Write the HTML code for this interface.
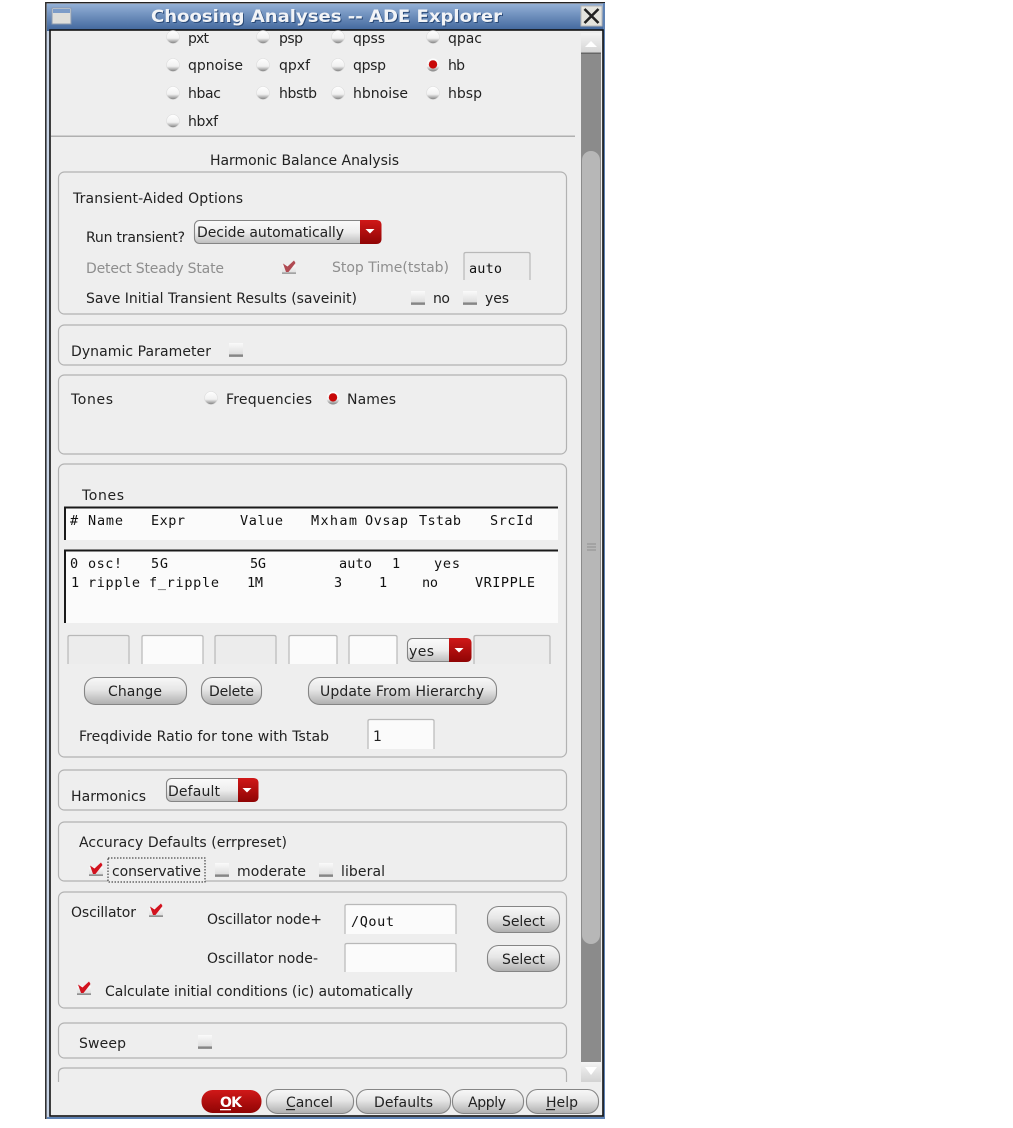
<!DOCTYPE html>
<html><head><meta charset="utf-8"><style>
html,body{margin:0;padding:0;background:#fff;overflow:hidden}
svg{display:block;filter:blur(.35px)}
text{font-family:"DejaVu Sans","Liberation Sans",sans-serif;font-size:14px;fill:#222}
.m text,text.m{font-family:"DejaVu Sans Mono","Liberation Mono",monospace;font-size:13.5px;fill:#111}
.g{fill:#8e8e8e}
.p{fill:none;stroke:#b2b2b2;stroke-width:1.2}
.i{fill:#fbfbfb;stroke:none}
.ig{fill:#ececec}
.it{fill:none;stroke:#b8b8b8;stroke-width:1.2}
.btn{fill:url(#bg);stroke:#858585;stroke-width:1.1}
</style></head><body>
<svg xmlns="http://www.w3.org/2000/svg" width="1013" height="1128" viewBox="0 0 1013 1128">
<defs>
<linearGradient id="tb" x1="0" y1="0" x2="0" y2="1"><stop offset="0" stop-color="#93b0d6"/><stop offset="1" stop-color="#3f659b"/></linearGradient>
<linearGradient id="bg" x1="0" y1="0" x2="0" y2="1"><stop offset="0" stop-color="#f8f8f8"/><stop offset=".45" stop-color="#e6e6e6"/><stop offset="1" stop-color="#aeaeae"/></linearGradient>
<linearGradient id="dd" x1="0" y1="0" x2="0" y2="1"><stop offset="0" stop-color="#fafafa"/><stop offset=".5" stop-color="#eeeeee"/><stop offset="1" stop-color="#bdbdbd"/></linearGradient>
<linearGradient id="red" x1="0" y1="0" x2="0" y2="1"><stop offset="0" stop-color="#d01818"/><stop offset="1" stop-color="#8f0404"/></linearGradient>
<linearGradient id="rad" x1="0" y1="0" x2="0" y2="1"><stop offset="0" stop-color="#ffffff"/><stop offset=".6" stop-color="#f0f0f0"/><stop offset="1" stop-color="#7e7e7e"/></linearGradient>
<linearGradient id="chk" x1="0" y1="0" x2="0" y2="1"><stop offset="0" stop-color="#fafafa"/><stop offset=".8" stop-color="#dedede"/><stop offset=".84" stop-color="#7c7c7c"/><stop offset="1" stop-color="#9a9a9a"/></linearGradient>
<linearGradient id="sc" x1="0" y1="0" x2="0" y2="1"><stop offset="0" stop-color="#f4f4f4"/><stop offset="1" stop-color="#d2d2d2"/></linearGradient>
<g id="r"><circle r="6.5" fill="url(#rad)" stroke="#dcdcdc" stroke-width=".6"/></g>
<g id="rr"><circle r="6.5" fill="url(#rad)"/><circle cy="-.6" r="4.2" fill="#c80808"/></g>
<g id="c"><rect x="-7" y="-7" width="14" height="14" fill="url(#chk)"/></g>
<g id="ck"><rect x="-7" y="-2" width="14" height="9" fill="url(#chk)"/><path d="M-6-3.500 L-1.500-.5 L5-6.500 L6.500-4 L-.5 5 L-3 5 Z" fill="#d2121e"/></g>
<g id="ckg"><rect x="-7" y="-2" width="14" height="9" fill="url(#chk)" opacity=".8"/><path d="M-6-3.500 L-1.500-.5 L5-6.500 L6.500-4 L-.5 5 L-3 5 Z" fill="#b04a52"/></g>
<path id="tri" d="M-4.500-2 H4.500 L0 2.500Z" fill="#fff"/>
</defs>

<!-- window frame -->
<rect x="45" y="2" width="560" height="1117" fill="#c8d4e6"/>
<rect x="45" y="2" width="560" height="1.4" fill="#222"/>
<rect x="45" y="2" width="1.600" height="1117" fill="#333"/>
<rect x="603" y="3" width="2" height="1116" fill="#5f83b5"/>
<rect x="47" y="4" width="556" height="27" fill="url(#tb)"/>
<rect x="47" y="1117" width="558" height="2" fill="#5f83b5"/>
<rect x="50" y="30" width="553" height="1086" fill="#eeeeee" stroke="#111" stroke-width="1.6"/>

<!-- title bar -->
<rect x="52" y="8" width="19" height="16" fill="#dededa" stroke="#8a9ab0"/>
<rect x="53" y="9" width="17" height="4" fill="#7c9cc8"/>
<text x="152" y="23" textLength="351" lengthAdjust="spacingAndGlyphs" style="font-size:17px;font-weight:bold;fill:#2a4a78">Choosing Analyses -- ADE Explorer</text>
<text x="151" y="22" textLength="351" lengthAdjust="spacingAndGlyphs" style="font-size:17px;font-weight:bold;fill:#f2f4f7">Choosing Analyses -- ADE Explorer</text>
<rect x="581" y="6" width="21" height="20" fill="#e4e4de" stroke="#b5b5b5"/>
<path d="M584.500 9 L598.500 23 M598.500 9 L584.500 23" stroke="#222" stroke-width="2.6" fill="none"/>

<!-- scrollbar -->
<rect x="581" y="33" width="20" height="1049" fill="#8b8b8b"/>
<rect x="581" y="33" width="20" height="21" fill="url(#sc)"/>
<rect x="581" y="52.500" width="20" height="1.500" fill="#666"/>
<path d="M591 41 L597 47 H585Z" fill="#fff"/>
<rect x="582" y="151" width="18" height="793" rx="9" fill="#b7b7b7"/>
<path d="M587 544 H596 M587 547 H596 M587 550 H596" stroke="#8f8f8f" fill="none"/>
<rect x="581" y="1062" width="20" height="20" fill="url(#sc)"/>
<path d="M585 1067 H597 L591 1075Z" fill="#fff"/>

<!-- radios top -->
<use href="#r" x="173" y="37"/><text x="188" y="43" textLength="21">pxt</text>
<use href="#r" x="263" y="37"/><text x="279" y="43" textLength="24">psp</text>
<use href="#r" x="338" y="37"/><text x="353" y="43" textLength="32">qpss</text>
<use href="#r" x="433" y="37"/><text x="448" y="43" textLength="34">qpac</text>
<use href="#r" x="173" y="65"/><text x="188" y="70" textLength="55">qpnoise</text>
<use href="#r" x="263" y="65"/><text x="279" y="70" textLength="31">qpxf</text>
<use href="#r" x="338" y="65"/><text x="353" y="70" textLength="33">qpsp</text>
<use href="#rr" x="433" y="65"/><text x="448" y="70" textLength="17">hb</text>
<use href="#r" x="173" y="93"/><text x="188" y="98" textLength="33">hbac</text>
<use href="#r" x="263" y="93"/><text x="279" y="98" textLength="38">hbstb</text>
<use href="#r" x="338" y="93"/><text x="353" y="98" textLength="55">hbnoise</text>
<use href="#r" x="433" y="93"/><text x="448" y="98" textLength="34">hbsp</text>
<use href="#r" x="173" y="121"/><text x="188" y="126" textLength="30">hbxf</text>
<rect x="51" y="135.500" width="524" height="1.500" fill="#b0b0b0"/>
<text x="210" y="165" textLength="189">Harmonic Balance Analysis</text>

<!-- panel frames -->
<rect class="p" x="58.500" y="172" width="508" height="142" rx="6"/>
<rect class="p" x="58.500" y="325" width="508" height="40" rx="6"/>
<rect class="p" x="58.500" y="375" width="508" height="79" rx="6"/>
<rect class="p" x="58.500" y="464" width="508" height="293" rx="6"/>
<rect class="p" x="58.500" y="770" width="508" height="40" rx="6"/>
<rect class="p" x="58.500" y="822" width="508" height="59" rx="6"/>
<rect class="p" x="58.500" y="892" width="508" height="116" rx="6"/>
<rect class="p" x="58.500" y="1023" width="508" height="35" rx="6"/>
<path class="p" d="M58.500 1082 V1074 Q58.500 1068 64.500 1068 H560.500 Q566.500 1068 566.500 1074 V1082"/>

<!-- transient -->
<text x="73" y="203" textLength="170">Transient-Aided Options</text>
<text x="86" y="242" textLength="99">Run transient?</text>
<rect class="btn" x="194.500" y="220.500" width="186" height="23" rx="5" style="fill:url(#dd)"/>
<path d="M360 220 H376 Q381.500 220 381.500 225 V239 Q381.500 244 376 244 H360Z" fill="url(#red)"/>
<use href="#tri" x="370" y="231"/>
<text x="197" y="237" textLength="147">Decide automatically</text>
<text class="g" x="86" y="273" textLength="138">Detect Steady State</text>
<use href="#ckg" x="289" y="267"/>
<text class="g" x="332" y="272" textLength="117">Stop Time(tstab)</text>
<rect class="ig" x="464" y="252" width="66" height="28"/><path class="it" d="M464 280 V254 Q464 252.500 466 252.500 H528 Q530 252.500 530 254 V280"/>
<text class="m" x="469" y="273" textLength="33">auto</text>
<text x="86" y="303" textLength="271">Save Initial Transient Results (saveinit)</text>
<use href="#c" x="418" y="298"/><text x="433" y="303" textLength="17">no</text>
<use href="#c" x="470" y="298"/><text x="485" y="303" textLength="24">yes</text>

<text x="71" y="356" textLength="140">Dynamic Parameter</text>
<use href="#c" x="236" y="350"/>

<text x="71" y="404" textLength="42">Tones</text>
<use href="#r" x="211" y="398"/><text x="226" y="404" textLength="86">Frequencies</text>
<use href="#rr" x="333" y="398"/><text x="347" y="404" textLength="49">Names</text>

<!-- tones -->
<text x="82" y="500" textLength="42">Tones</text>
<rect x="65" y="507" width="493" height="33" fill="#fbfbfb"/>
<path d="M65 540 V507.500 H558" stroke="#1a1a1a" stroke-width="2" fill="none"/>
<g class="m">
<text x="70" y="525" textLength="8">#</text>
<text x="88" y="525" textLength="35">Name</text>
<text x="151" y="525" textLength="34">Expr</text>
<text x="240" y="525" textLength="43">Value</text>
<text x="311" y="525" textLength="46">Mxham</text>
<text x="365" y="525" textLength="43">Ovsap</text>
<text x="419" y="525" textLength="42">Tstab</text>
<text x="490" y="525" textLength="43">SrcId</text>
</g>
<rect x="65" y="550" width="493" height="73" fill="#fbfbfb"/>
<path d="M65 623 V550.500 H558" stroke="#1a1a1a" stroke-width="2" fill="none"/>
<g class="m">
<text x="70" y="568" textLength="7">0</text>
<text x="88" y="568" textLength="34">osc!</text>
<text x="151" y="568" textLength="17">5G</text>
<text x="250" y="568" textLength="16">5G</text>
<text x="339" y="568" textLength="33">auto</text>
<text x="392" y="568" textLength="6">1</text>
<text x="434" y="568" textLength="26">yes</text>
<text x="71" y="587" textLength="6">1</text>
<text x="88" y="587" textLength="52">ripple</text>
<text x="149" y="587" textLength="70">f_ripple</text>
<text x="247" y="587" textLength="16">1M</text>
<text x="334" y="587" textLength="7">3</text>
<text x="379" y="587" textLength="6">1</text>
<text x="422" y="587" textLength="16">no</text>
<text x="475" y="587" textLength="60">VRIPPLE</text>
</g>

<!-- tone edit row -->
<rect class="ig" x="68" y="635" width="61" height="29"/><path class="it" d="M68 664 V637 Q68 635.500 70 635.500 H127 Q129 635.500 129 637 V664"/>
<rect class="i" x="142" y="635" width="61" height="29"/><path class="it" d="M142 664 V637 Q142 635.500 144 635.500 H201 Q203 635.500 203 637 V664"/>
<rect class="ig" x="215" y="635" width="61" height="29"/><path class="it" d="M215 664 V637 Q215 635.500 217 635.500 H274 Q276 635.500 276 637 V664"/>
<rect class="i" x="289" y="635" width="48" height="29"/><path class="it" d="M289 664 V637 Q289 635.500 291 635.500 H335 Q337 635.500 337 637 V664"/>
<rect class="i" x="349" y="635" width="48" height="29"/><path class="it" d="M349 664 V637 Q349 635.500 351 635.500 H395 Q397 635.500 397 637 V664"/>
<rect class="btn" x="407.500" y="638.500" width="63" height="23" rx="5" style="fill:url(#dd)"/>
<path d="M449 638 H466 Q471.500 638 471.500 643 V657 Q471.500 662 466 662 H449Z" fill="url(#red)"/>
<use href="#tri" x="459" y="650"/>
<text x="409" y="656" textLength="25">yes</text>
<rect class="ig" x="474" y="635" width="76" height="29"/><path class="it" d="M474 664 V637 Q474 635.500 476 635.500 H548 Q550 635.500 550 637 V664"/>

<rect class="btn" x="84.500" y="677.500" width="102" height="27" rx="11"/><text x="108" y="696" textLength="54">Change</text>
<rect class="btn" x="201.500" y="677.500" width="60" height="27" rx="11"/><text x="209" y="696" textLength="45">Delete</text>
<rect class="btn" x="308.500" y="677.500" width="188" height="27" rx="11"/><text x="320" y="696" textLength="164">Update From Hierarchy</text>
<text x="79" y="741" textLength="250">Freqdivide Ratio for tone with Tstab</text>
<rect class="i" x="368" y="719" width="66" height="30"/><path class="it" d="M368 749 V721 Q368 719.500 370 719.500 H432 Q434 719.500 434 721 V749"/>
<text x="373" y="741" textLength="6">1</text>

<!-- harmonics -->
<text x="71" y="801" textLength="75">Harmonics</text>
<rect class="btn" x="166.500" y="778.500" width="91" height="23" rx="5" style="fill:url(#dd)"/>
<path d="M238 778 H253 Q258.500 778 258.500 783 V797 Q258.500 802 253 802 H238Z" fill="url(#red)"/>
<use href="#tri" x="247" y="790"/>
<text x="168" y="796" textLength="52">Default</text>

<!-- accuracy -->
<text x="79" y="847" textLength="208">Accuracy Defaults (errpreset)</text>
<use href="#ck" x="96" y="869"/>
<rect x="108" y="858" width="97" height="24" fill="#eeeeee" stroke="#222" stroke-dasharray="1.500 1.500"/>
<text x="112" y="876" textLength="89">conservative</text>
<use href="#c" x="222" y="870"/><text x="237" y="876" textLength="69">moderate</text>
<use href="#c" x="326" y="870"/><text x="341" y="876" textLength="44">liberal</text>

<!-- oscillator -->
<text x="71" y="917" textLength="65">Oscillator</text>
<use href="#ck" x="156" y="910"/>
<text x="207" y="924" textLength="115">Oscillator node+</text>
<rect class="i" x="345" y="904" width="111" height="30"/><path class="it" d="M345 934 V906 Q345 904.500 347 904.500 H454 Q456 904.500 456 906 V934"/>
<text class="m" x="351" y="926" textLength="43">/Qout</text>
<rect class="btn" x="487.500" y="906.500" width="72" height="26" rx="11"/><text x="502" y="926" textLength="43">Select</text>
<text x="207" y="963" textLength="111">Oscillator node-</text>
<rect class="i" x="345" y="943" width="111" height="29"/><path class="it" d="M345 972 V945 Q345 943.500 347 943.500 H454 Q456 943.500 456 945 V972"/>
<rect class="btn" x="487.500" y="945.500" width="72" height="26" rx="11"/><text x="502" y="964" textLength="43">Select</text>
<use href="#ck" x="84" y="988"/>
<text x="105" y="996" textLength="308">Calculate initial conditions (ic) automatically</text>

<text x="79" y="1048" textLength="47">Sweep</text>
<use href="#c" x="205" y="1042"/>

<!-- bottom buttons -->
<rect x="201.500" y="1090" width="60" height="23" rx="11" fill="url(#red)"/>
<text x="220" y="1107" textLength="22" style="font-weight:bold;fill:#fff">OK</text>
<rect x="220" y="1109" width="11" height="1.300" fill="#fff"/>
<rect class="btn" x="266.500" y="1089.500" width="87" height="24" rx="11"/><text x="286" y="1107" textLength="47">Cancel</text>
<rect x="286" y="1109" width="9" height="1.200" fill="#222"/>
<rect class="btn" x="356.500" y="1089.500" width="94" height="24" rx="11"/><text x="374" y="1107" textLength="59">Defaults</text>
<rect class="btn" x="452.500" y="1089.500" width="71" height="24" rx="11"/><text x="468" y="1107" textLength="38">Apply</text>
<rect class="btn" x="526.500" y="1089.500" width="72" height="24" rx="11"/><text x="546" y="1107" textLength="32">Help</text>
<rect x="546" y="1109" width="9" height="1.200" fill="#222"/>
</svg>
</body></html>
